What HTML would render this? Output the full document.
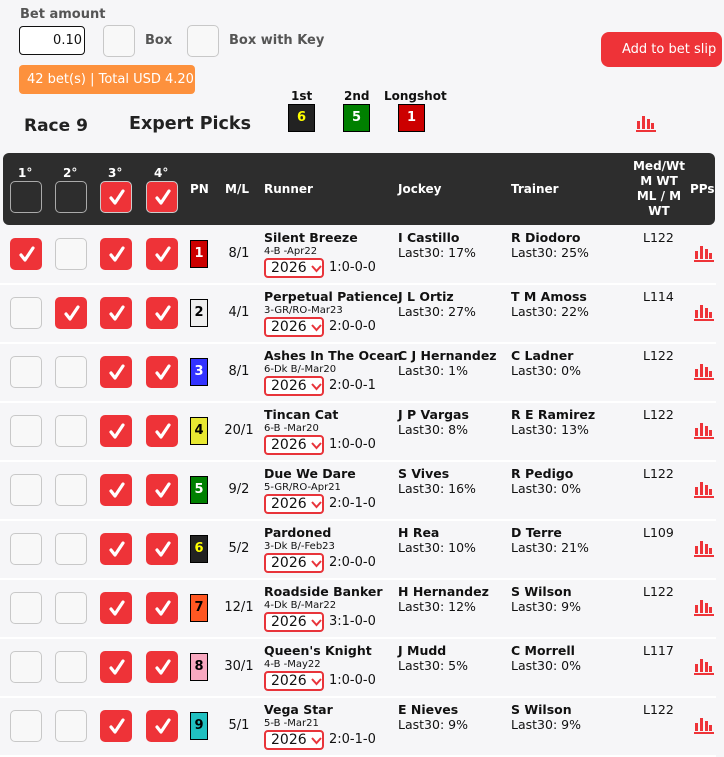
<!DOCTYPE html>
<html><head><meta charset="utf-8">
<style>
*{box-sizing:border-box;margin:0;padding:0}
body{width:724px;height:755px;background:#f6f6f8;font-family:"DejaVu Sans","Liberation Sans",sans-serif;position:relative;overflow:hidden;color:#111}
.a{position:absolute;white-space:nowrap}
.b{font-weight:bold}
.cb{position:absolute;width:32px;height:32px;border-radius:5px;border:1px solid #c8c8c8;background:#f8f8f8}
.cb.on{background:#ee3338;border-color:#ee3338}
.cb svg{position:absolute;left:8px;top:7px}
.hcb{position:absolute;width:32px;height:32px;border-radius:5px;border:1px solid #aaa;background:#2d2d2d}
.hcb.on{background:#ee3338;border-color:#ccc}
.hcb svg{position:absolute;left:8px;top:7px}
.badge{position:absolute;width:18px;height:28px;border:1px solid #000;font-weight:bold;font-size:13px;text-align:center;line-height:26px}
.row{position:absolute;left:0;width:716px;height:59px;border-bottom:2px solid #fff}
.sel{position:absolute;left:264px;top:32px;width:60px;height:20px;border:2px solid #e8343a;border-radius:4px;background:#fff;font-size:14px;line-height:16px}
.sel span{position:absolute;left:5px;top:0}
.sel svg{position:absolute;left:45px;top:5px}
.hd{color:#fff;font-weight:bold;font-size:12px}
</style></head><body>
<div class="a b" style="left:20px;top:7px;font-size:13px;color:#555">Bet amount</div>
<div class="a" style="left:19px;top:26px;width:66px;height:29px;border:1px solid #111;border-radius:4px;background:#fff;font-size:13px;text-align:right;padding-right:2px;line-height:27px">0.10</div>
<div class="cb" style="left:103px;top:25px"></div>
<div class="a b" style="left:145px;top:33px;font-size:13px;color:#555">Box</div>
<div class="cb" style="left:187px;top:25px"></div>
<div class="a b" style="left:229px;top:33px;font-size:13px;color:#555">Box with Key</div>
<div class="a" style="left:19px;top:65px;width:176px;height:29px;background:#fd913d;border-radius:4px;color:#fff;font-size:13px;line-height:29px;padding-left:8px">42 bet(s) | Total USD 4.20</div>
<div class="a" style="left:601px;top:32px;width:121px;height:35px;background:#ee3338;border-radius:8px;color:#fff;font-size:13px;line-height:35px;padding-left:21px">Add to bet slip</div>
<div class="a b" style="left:24px;top:116px;font-size:17px;color:#222">Race 9</div>
<div class="a b" style="left:129px;top:114px;font-size:17.5px;color:#222">Expert Picks</div>
<div class="a b" style="left:291px;top:89px;font-size:12px">1st</div>
<div class="badge" style="left:288px;top:104px;width:27px;height:28px;background:#222;color:#ff0">6</div>
<div class="a b" style="left:344px;top:89px;font-size:12px">2nd</div>
<div class="badge" style="left:343px;top:104px;width:27px;height:28px;background:#008000;color:#fff">5</div>
<div class="a b" style="left:384px;top:89px;font-size:12px">Longshot</div>
<div class="badge" style="left:398px;top:104px;width:27px;height:28px;background:#c00;color:#fff">1</div>
<svg class="a" style="left:636px;top:116px" width="21" height="17"><g fill="#ee3338"><rect x="1" y="5" width="3" height="8"/><rect x="6" y="0" width="3" height="13"/><rect x="11" y="3" width="3" height="10"/><rect x="15" y="7" width="3" height="6"/><rect x="0" y="14" width="20" height="2"/></g></svg>

<div class="a" style="left:3px;top:153px;width:712px;height:72px;background:#2d2d2d;border-radius:6px"></div>
<div class="a hd" style="left:18px;top:166px">1°</div>
<div class="a hd" style="left:63px;top:166px">2°</div>
<div class="a hd" style="left:108px;top:166px">3°</div>
<div class="a hd" style="left:154px;top:166px">4°</div>
<div class="hcb" style="left:10px;top:181px"></div>
<div class="hcb" style="left:55px;top:181px"></div>
<div class="hcb on" style="left:100px;top:181px"><svg width="16" height="17"><path d="M2 9 L6 14 L14 2" stroke="#fff" stroke-width="3.2" fill="none" stroke-linecap="round" stroke-linejoin="round"/></svg></div>
<div class="hcb on" style="left:146px;top:181px"><svg width="16" height="17"><path d="M2 9 L6 14 L14 2" stroke="#fff" stroke-width="3.2" fill="none" stroke-linecap="round" stroke-linejoin="round"/></svg></div>
<div class="a hd" style="left:190px;top:182px">PN</div>
<div class="a hd" style="left:225px;top:182px">M/L</div>
<div class="a hd" style="left:264px;top:182px">Runner</div>
<div class="a hd" style="left:398px;top:182px">Jockey</div>
<div class="a hd" style="left:511px;top:182px">Trainer</div>
<div class="a hd" style="left:619px;top:159px;width:80px;text-align:center;line-height:15px">Med/Wt<br>M WT<br>ML / M<br>WT</div>
<div class="a hd" style="left:690px;top:182px">PPs</div>

<div id="rows"></div>
<script>
var ck='<svg width="16" height="17"><path d="M2 9 L6 14 L14 2" stroke="#fff" stroke-width="3.2" fill="none" stroke-linecap="round" stroke-linejoin="round"/></svg>';
var chart='<svg width="21" height="17"><g fill="#ee3338"><rect x="1" y="5" width="3" height="8"/><rect x="6" y="0" width="3" height="13"/><rect x="11" y="3" width="3" height="10"/><rect x="15" y="7" width="3" height="6"/><rect x="0" y="14" width="20" height="2"/></g></svg>';
var chev='<svg width="11" height="8"><path d="M1 1 L5.5 6 L10 1" stroke="#e8343a" stroke-width="2" fill="none"/></svg>';
var R=[
[1,1,0,'#c00','#fff','8/1','Silent Breeze','4-B -Apr22','1:0-0-0','I Castillo','17%','R Diodoro','25%','L122'],
[0,1,1,'#eee','#000','4/1','Perpetual Patience','3-GR/RO-Mar23','2:0-0-0','J L Ortiz','27%','T M Amoss','22%','L114'],
[0,0,1,'#3333ff','#fff','8/1','Ashes In The Ocean','6-Dk B/-Mar20','2:0-0-1','C J Hernandez','1%','C Ladner','0%','L122'],
[0,0,1,'#e8e832','#000','20/1','Tincan Cat','6-B -Mar20','1:0-0-0','J P Vargas','8%','R E Ramirez','13%','L122'],
[0,0,1,'#008000','#fff','9/2','Due We Dare','5-GR/RO-Apr21','2:0-1-0','S Vives','16%','R Pedigo','0%','L122'],
[0,0,1,'#222','#ff0','5/2','Pardoned','3-Dk B/-Feb23','2:0-0-0','H Rea','10%','D Terre','21%','L109'],
[0,0,1,'#ff5722','#000','12/1','Roadside Banker','4-Dk B/-Mar22','3:1-0-0','H Hernandez','12%','S Wilson','9%','L122'],
[0,0,1,'#f8a8c0','#000','30/1','Queen\'s Knight','4-B -May22','1:0-0-0','J Mudd','5%','C Morrell','0%','L117'],
[0,0,1,'#20c0c0','#000','5/1','Vega Star','5-B -Mar21','2:0-1-0','E Nieves','9%','S Wilson','9%','L122']];
var h='';
R.forEach(function(r,i){
var t=226+i*59;var n=i+1;
h+='<div class="row" style="top:'+t+'px">';
h+='<div class="cb'+(r[0]?' on':'')+'" style="left:10px;top:12px">'+(r[0]?ck:'')+'</div>';
h+='<div class="cb'+(i==1?' on':'')+'" style="left:55px;top:12px">'+(i==1?ck:'')+'</div>';
h+='<div class="cb on" style="left:100px;top:12px">'+ck+'</div>';
h+='<div class="cb on" style="left:146px;top:12px">'+ck+'</div>';
h+='<div class="badge" style="left:190px;top:14px;background:'+r[3]+';color:'+r[4]+'">'+n+'</div>';
h+='<div class="a" style="left:214px;width:50px;text-align:center;top:20px;font-size:13px">'+r[5]+'</div>';
h+='<div class="a b" style="left:264px;top:4px;font-size:12.5px">'+r[6]+'</div>';
h+='<div class="a" style="left:264px;top:20px;font-size:10px">'+r[7]+'</div>';
h+='<div class="sel"><span>2026</span>'+chev+'</div>';
h+='<div class="a" style="left:329px;top:34px;font-size:13px">'+r[8]+'</div>';
h+='<div class="a b" style="left:398px;top:4px;font-size:12.5px">'+r[9]+'</div>';
h+='<div class="a" style="left:398px;top:19px;font-size:12.5px">Last30: '+r[10]+'</div>';
h+='<div class="a b" style="left:511px;top:4px;font-size:12.5px">'+r[11]+'</div>';
h+='<div class="a" style="left:511px;top:19px;font-size:12.5px">Last30: '+r[12]+'</div>';
h+='<div class="a" style="left:643px;top:4px;font-size:12.5px">'+r[13]+'</div>';
h+='<div class="a" style="left:694px;top:20px">'+chart+'</div>';
h+='</div>';
});
document.getElementById('rows').innerHTML=h;
</script>
</body></html>
